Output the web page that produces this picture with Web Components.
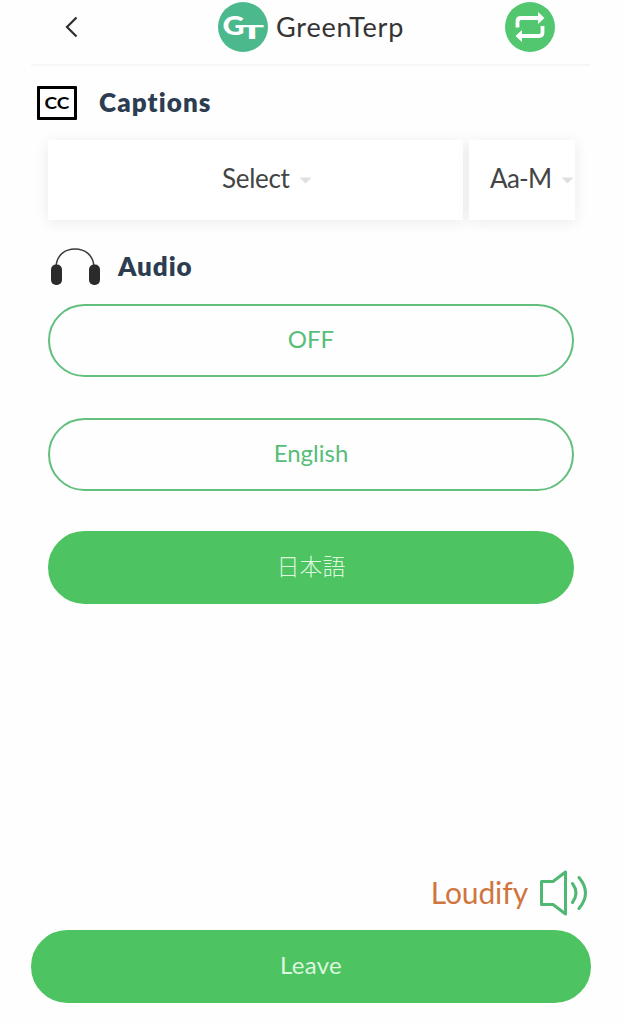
<!DOCTYPE html>
<html lang="en">
<head>
<meta charset="utf-8">
<title>GreenTerp</title>
<style>
  html, body {
    margin: 0;
    background: #fefefe;
  }
  body {
    font-family: Lato, "Noto Sans CJK JP", sans-serif;
    --green: #4dc361;
    --ink: #2c3c51;
  }
</style>
</head>
<body>
<terp-app></terp-app>

<script>
const define = (name, html) => {
  const template = document.createElement('template');
  template.innerHTML = html;

  customElements.define(name, class extends HTMLElement {
    constructor() {
      super();

      this.attachShadow({ mode: 'open' });
      this.shadowRoot.appendChild(template.content.cloneNode(true));
    }
  });
};

define('terp-logo', /* html */`
  <style>
  :host { display: block; width: 50px; height: 50px; }
  svg { display: block; }
  text { font-family: Lato, sans-serif; font-weight: 900; fill: #ffffff; }
  </style>
  <svg width="50" height="50" viewBox="0 0 50 50">
    <circle cx="25" cy="25" r="25" fill="#4cb98c"/>
    <text x="4.500" y="32.500" font-size="26" textLength="22" lengthAdjust="spacingAndGlyphs">G</text>
    <text x="22" y="37" font-size="19.500" textLength="24" lengthAdjust="spacingAndGlyphs">T</text>
  </svg>
`);

define('repeat-button', /* html */`
  <style>
  :host { display: block; width: 50px; height: 50px; }
  svg { display: block; }
  </style>
  <svg width="50" height="50" viewBox="0 0 50 50">
    <circle cx="25" cy="25" r="25" fill="#53c770"/>
    <g fill="none" stroke="#ffffff" stroke-width="3.800" stroke-linejoin="round">
      <path d="M12.500 25.500V19.500Q12.500 16 16 16H34"/>
      <path d="M37.500 24V30.500Q37.500 34 34 34H16"/>
    </g>
    <path d="M33 10L39.500 16L33 22Z M17 28L10.500 34L17 40Z" fill="#ffffff"/>
  </svg>
`);

define('terp-header', /* html */`
  <style>
  :host {
    display: grid;
    grid-template-columns: 187px 1fr 85px;
    height: 66px;
    padding-top: 2px;
    box-sizing: border-box;
    border-bottom: 2px solid #f6f6f6;
    margin: 0 34px 0 31px;
  }
  .back { margin: 14px 0 0 34px; }
  .brand { display: flex; gap: 8px; height: 50px; align-items: center; }
  .name { font-size: 27px; line-height: 50px; color: #343434; letter-spacing: 0.800px; }
  </style>
  <svg class="back" width="14" height="22" viewBox="0 0 14 22">
    <path d="M11.500 1.500L2 11L11.500 20.500" fill="none" stroke="#2e2e2e" stroke-width="2.200"/>
  </svg>
  <div class="brand">
    <terp-logo></terp-logo>
    <span class="name">GreenTerp</span>
  </div>
  <repeat-button></repeat-button>
`);

define('section-title', /* html */`
  <style>
  :host { display: flex; align-items: center; color: var(--ink); font-size: 26px; font-weight: 800; line-height: 34px; }
  span { padding-bottom: 2px; }
  </style>
  <slot name="icon"></slot>
  <span><slot></slot></span>
`);

define('captions-icon', /* html */`
  <style>
  :host {
    display: block;
    box-sizing: border-box;
    width: 40px;
    height: 34px;
    border: 3px solid #000000;
    border-radius: 1px;
  }
  svg { display: block; }
  text { font-family: Lato, sans-serif; font-size: 17px; font-weight: 700; letter-spacing: 0; fill: #000000; }
  </style>
  <svg width="34" height="28" viewBox="0 0 34 28">
    <text x="4.500" y="20" textLength="25" lengthAdjust="spacingAndGlyphs">CC</text>
  </svg>
`);

define('headphones-icon', /* html */`
  <style>
  :host { display: block; width: 50px; height: 38px; }
  svg { display: block; }
  </style>
  <svg width="50" height="38" viewBox="0 0 50 38">
    <path d="M6 18C7 7 15 1 25 1S43 7 44 18" fill="none" stroke="#3c3c3c" stroke-width="1.500"/>
    <rect x="1" y="16.500" width="11" height="20.500" rx="5" fill="#2b2b2b"/>
    <rect x="39" y="16.500" width="11" height="20.500" rx="5" fill="#2b2b2b"/>
  </svg>
`);

define('drop-select', /* html */`
  <style>
  :host {
    display: flex;
    align-items: center;
    box-sizing: border-box;
    height: 80px;
    background: #ffffff;
    box-shadow: 0 2px 14px rgba(0, 0, 0, 0.08);
    color: #444444;
    font-size: 26px;
    line-height: 77px;
    white-space: nowrap;
  }
  span { display: block; height: 80px; }
  svg { flex: none; margin-left: 9px; }
  </style>
  <span><slot></slot></span>
  <svg width="13" height="7" viewBox="0 0 13 7"><path d="M0.500 0.500H12.500L6.500 6.500Z" fill="#dfdfdf"/></svg>
`);

define('pill-button', /* html */`
  <style>
  :host {
    display: block;
    box-sizing: border-box;
    height: 73px;
    border: 2px solid #62bf7e;
    border-radius: 37px;
    color: #58bd78;
    font-size: 24px;
    line-height: 66px;
    text-align: center;
  }
  :host([filled]) {
    background: var(--green);
    border-color: var(--green);
    color: #dcf6df;
  }
  </style>
  <slot></slot>
`);

define('speaker-icon', /* html */`
  <style>
  :host { display: block; width: 50px; height: 46px; }
  svg { display: block; }
  </style>
  <svg width="50" height="46" viewBox="0 0 50 46">
    <g fill="none" stroke="#4fb973" stroke-width="3" stroke-linejoin="round" stroke-linecap="round">
      <path d="M2.500 11.500H14L26.500 2V44L14 34.500H2.500Z"/>
      <path d="M33.500 13.500Q40.500 23 33.500 32.500"/>
      <path d="M40 7.500Q53 23 40 38.500"/>
    </g>
  </svg>
`);

define('terp-app', /* html */`
  <style>
  :host { display: flex; flex-direction: column; height: 1024px; }
  .captions { margin: 19px 0 0 37px; gap: 22px; height: 36px; letter-spacing: 1.100px; }
  .selects { display: grid; grid-template-columns: 415px 106px; gap: 6px; margin: 19px 0 0 48px; }
  .language { padding-left: 174px; letter-spacing: -0.300px; }
  .size { padding-left: 21px; letter-spacing: -0.700px; }
  .audio { margin: 28px 0 0 50px; gap: 18px; height: 38px; letter-spacing: 0.900px; }
  .options { display: grid; gap: 40.500px; margin: 18px 50px 0 48px; }
  .japanese { font-size: 23px; font-weight: 300; }
  footer { margin: auto 33px 21px 31px; }
  .loudify { display: flex; justify-content: flex-end; align-items: center; gap: 11px; margin: 0 2px 14px 0; color: #d07540; font-size: 30px; line-height: 44px; }
  .loudify span { height: 46px; letter-spacing: -0.100px; }
  .leave { letter-spacing: 0.300px; }
  </style>
  <terp-header></terp-header>
  <section-title class="captions"><captions-icon slot="icon"></captions-icon>Captions</section-title>
  <div class="selects">
    <drop-select class="language">Select</drop-select>
    <drop-select class="size">Aa-M</drop-select>
  </div>
  <section-title class="audio"><headphones-icon slot="icon"></headphones-icon>Audio</section-title>
  <div class="options">
    <pill-button>OFF</pill-button>
    <pill-button>English</pill-button>
    <pill-button class="japanese" lang="ja" filled>日本語</pill-button>
  </div>
  <footer>
    <div class="loudify"><span>Loudify</span><speaker-icon></speaker-icon></div>
    <pill-button class="leave" filled>Leave</pill-button>
  </footer>
`);
</script>
</body>
</html>
